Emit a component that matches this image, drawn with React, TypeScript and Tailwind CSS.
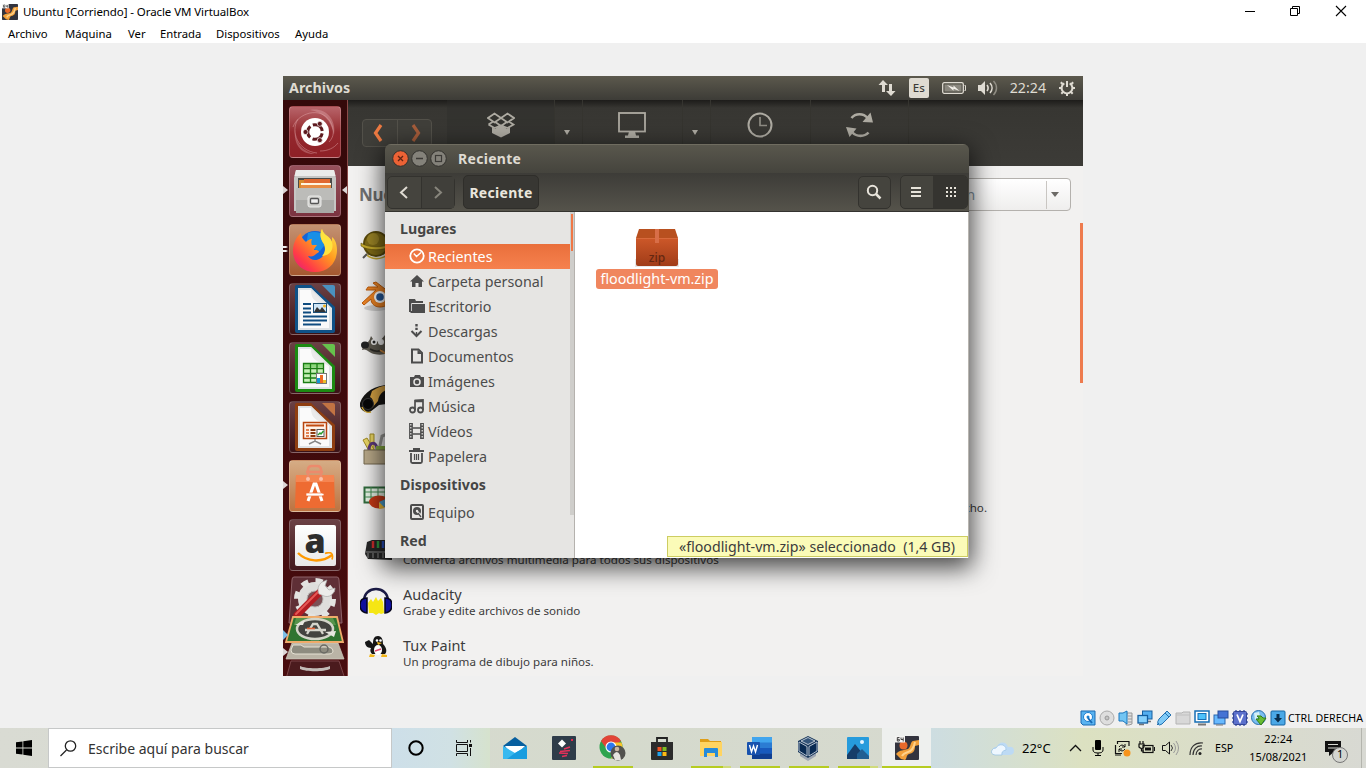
import React from "react";

type P = { className?: string; children?: React.ReactNode };

const Svg = ({ w, h, vb, className = "", children }: P & { w: number; h: number; vb?: string }) => (
  <svg width={w} height={h} viewBox={vb ?? `0 0 ${w} ${h}`} fill="none" className={`block shrink-0 ${className}`}>
    {children}
  </svg>
);

/* ---------- VirtualBox window chrome ---------- */

const VmLogo = ({ s }: { s: number }) => (
  <Svg w={s} h={s} vb="0 0 24 24">
    <rect width="24" height="24" rx="1" fill="#33343e" />
    <circle cx="8.500" cy="9.500" r="4" fill="#e8692a" />
    <path d="M24 4l-6 1c-3 1-2 6-5 8-3 1-7 1-10 3l-2 2 5 5 4 1c2-1 1-5 4-6 5-1 6-4 6-8l4-1z" fill="#f2a03a" />
    <path d="M20 6c-1 5-3 9-7 10-3 1-5 2-6 4" stroke="#ffd28a" strokeWidth="2" />
    <rect x="0" y="0" width="10" height="6.500" fill="#f4f4f2" />
    <path d="M4.500 1.500H2.300V5h2V3.300h-2M6 1.500v2h2.200M8.200 1.500v4" stroke="#333" strokeWidth=".9" />
  </Svg>
);

const TitleBar = () => (
  <div className="flex h-[23px] shrink-0 items-center bg-white">
    <div className="ml-[2px]"><VmLogo s={16} /></div>
    <span className="ml-[5px] grow text-[11.500px] tracking-[-0.080px]">Ubuntu [Corriendo] - Oracle VM VirtualBox</span>
    <Svg w={12} h={12} className="mr-[33px]"><path d="M1 5.500h10" stroke="#000" /></Svg>
    <Svg w={12} h={12} className="mr-[34px] mb-[2px]">
      <path d="M1.500 3.500h7v7h-7zM3.500 3.500v-2h7v7h-2" stroke="#000" />
    </Svg>
    <Svg w={12} h={12} className="mr-[19px] mb-[2px]"><path d="M1 1l10 10M11 1L1 11" stroke="#000" strokeWidth="1.100" /></Svg>
  </div>
);

const MenuBar = () => (
  <div className="flex h-[20px] shrink-0 items-center bg-white pt-[2px] pl-2 text-[11.300px]">
    <span className="w-[57px]">Archivo</span>
    <span className="w-[63px]">Máquina</span>
    <span className="w-[32px]">Ver</span>
    <span className="w-[56px]">Entrada</span>
    <span className="w-[79px]">Dispositivos</span>
    <span>Ayuda</span>
  </div>
);

/* ---------- Ubuntu top panel ---------- */

const TopPanel = () => (
  <div className="flex h-6 shrink-0 items-center bg-linear-to-b from-[#5c594d] to-[#3d3c37] pl-[6px] text-[#dfdbd2]">
    <span className="grow text-[14.300px] font-bold">Archivos</span>
    <Svg w={18} h={18} className="mr-[13px]">
      <path d="M5 1L.500 6H4v7h3V6h3zM13 17l4.500-5H14V5h-3v7H8z" fill="#dfdbd2" />
    </Svg>
    <span className="mr-[13px] flex h-5 w-5 items-center justify-center rounded-[2px] bg-[#dfdbd2] text-[11.500px] font-medium text-[#3c3b37]">Es</span>
    <Svg w={24} h={14} className="mr-[12px]">
      <rect x=".700" y="1.700" width="20.600" height="10.600" rx="1.500" stroke="#dfdbd2" strokeWidth="1.300" />
      <rect x="2.500" y="3.500" width="17" height="7" fill="#8a877e" />
      <path d="M5 4l6.500 2.500V4.500L17.500 10l-6-2.300v2z" fill="#f2efe8" />
      <path d="M22.500 4.500h1v5h-1" stroke="#dfdbd2" />
    </Svg>
    <Svg w={20} h={18} className="mr-[12px]">
      <path d="M0 6h3l4-4v14l-4-4H0z" fill="#dfdbd2" />
      <path d="M9 6c1.500 2 1.500 4 0 6M12 4c2.700 3 2.700 7 0 10" stroke="#dfdbd2" strokeWidth="1.600" />
      <path d="M15.500 2c4 4 4 10 0 14" stroke="#8f8c83" strokeWidth="1.500" />
    </Svg>
    <span className="mr-[12px] text-[14.200px]">22:24</span>
    <Svg w={18} h={18} className="mr-[7px]">
      <path d="M6.300 4.300a5.400 5.400 0 1 0 5.400 0" stroke="#dfdbd2" strokeWidth="2" />
      <path d="M9 2v6" stroke="#dfdbd2" strokeWidth="2" />
      <path d="M1 9h2.500M14.500 9H17M2.800 3.300l2 2M15.200 3.300l-2 2M3.300 14.700l1.700-1.700M14.700 14.700L13 13M9 14.500V17" stroke="#dfdbd2" strokeWidth="2" />
    </Svg>
  </div>
);

/* ---------- Launcher ---------- */

const Tile = ({ className = "", children, left, right }: P & { left?: "arrow" | "double"; right?: boolean }) => (
  <div className="relative flex justify-center">
    {left === "arrow" && <Svg w={5} h={8} className="absolute top-[21px] left-0"><path d="M0 0l5 4-5 4z" fill="#dcd6d6" /></Svg>}
    {left === "double" && <Svg w={5} h={8} className="absolute top-[21px] left-0"><path d="M0 1h3l2 1-2 1H0zM0 5h3l2 1-2 1H0z" fill="#eee" /></Svg>}
    {right && <Svg w={5} h={8} className="absolute top-[21px] right-0"><path d="M5 0L0 4l5 4z" fill="#dcd6d6" /></Svg>}
    <div className={`flex h-[52px] w-[52px] items-center justify-center rounded-[4px] border border-white/20 ${className}`}>{children}</div>
  </div>
);

const DocFrame = ({ c, c2, children }: { c: string; c2: string; children: React.ReactNode }) => (
  <Svg w={42} h={50}>
    <path d="M1 3q0-2 2-2h14l24 22v24q0 2-2 2H3q-2 0-2-2z" fill={c} />
    <path d="M28 1h11q2 0 2 2v11z" fill={c2} />
    <path d="M4 4h13l21 20v22H4z" fill="#dfe3e6" />
    <path d="M6 6h11l18 17v21H6z" fill="#fafafa" />
    <path d="M17 4l20 20c-2-1-8-5-12-5-5-2-8-6-8-13z" fill="#e2e2e2" opacity=".7" />
    {children}
  </Svg>
);

const Launcher = () => (
  <div className="flex w-[65px] shrink-0 flex-col gap-[7px] border-r border-[#8b4a48] bg-linear-to-b from-[#35090a] to-[#480c0e] pt-[6px]">
    <Tile className="bg-linear-to-b from-[#b8646a] via-[#94282e] to-[#8f2026]">
      <Svg w={50} h={50}>
        <path d="M20 3c14-3 27 8 24 25C41 12 32 5 20 3zM5 22c0 14 7 22 20 25C12 48 3 38 5 22z" fill="#f1c8ca" opacity=".3" />
        <path d="M3 20C8 6 30-1 40 14c5 9 4 16-1 21M8 12C0 25 8 44 27 46M30 44c8 0 14-3 18-8" stroke="#e5aaae" strokeWidth="1" opacity=".45" />
        <circle cx="25" cy="25" r="14" fill="#fff" />
        <circle cx="25" cy="25" r="7.300" stroke="#5e1a1f" strokeWidth="3" strokeDasharray="12.500 2.790" strokeDashoffset="-1.400" />
        <circle cx="15.500" cy="25" r="2.500" fill="#5e1a1f" stroke="#fff" strokeWidth=".7" />
        <circle cx="29.800" cy="16.800" r="2.500" fill="#5e1a1f" stroke="#fff" strokeWidth=".7" />
        <circle cx="29.800" cy="33.200" r="2.500" fill="#5e1a1f" stroke="#fff" strokeWidth=".7" />
      </Svg>
    </Tile>
    <Tile left="arrow" right className="bg-linear-to-b from-[#97515b] to-[#7c3340]">
      <Svg w={46} h={48}>
        <path d="M4 3h38l2 8v33H2V11z" fill="#c6c6c4" />
        <path d="M4 3h38l1.500 6h-41z" fill="#ebebea" />
        <path d="M6 11h34v10H6z" fill="#4b4b48" />
        <path d="M7 13h27v8H7z" fill="#d88a2e" />
        <path d="M12 12h26v5H12z" fill="#e06830" />
        <path d="M9 16h30v6H9z" fill="#fff4e0" />
        <path d="M9 18h30v4H9z" fill="#e88c42" />
        <path d="M4 21h38v25H4z" fill="#a9a9a6" />
        <path d="M4 21h38v12H4z" fill="#bcbcb9" />
        <rect x="16" y="29" width="13" height="11" rx="2" fill="#d0d0cd" stroke="#ececea" />
        <rect x="18.500" y="31.500" width="8" height="5" rx="1" fill="#eee" stroke="#555" strokeWidth="1.300" />
      </Svg>
    </Tile>
    <Tile left="double" className="bg-linear-to-b from-[#c49272] to-[#a4582f]">
      <Svg w={46} h={46}>
        <defs>
          <linearGradient id="ff" x1="1" y1="0" x2="0" y2="1">
            <stop offset="0" stopColor="#fff14a" /><stop offset=".4" stopColor="#ff9a1f" /><stop offset=".75" stopColor="#ff3b47" /><stop offset="1" stopColor="#e0138c" />
          </linearGradient>
        </defs>
        <circle cx="23" cy="21" r="17" fill="#1465d8" />
        <path d="M16 6c10-3 18 1 19 9l-7 9-14-4z" fill="#1aa6ee" opacity=".65" />
        <path d="M30 2c-3 6-1 11 2 15 3 7-1 16-9 16-3 0-6-2-7-4 4 1 6 0 8-2l3-2c0-2-3-2-5-2 0-2 2-3 3-5h-5c-1-2-1-4 0-6-3 0-5 2-6 3C11 12 9 10 9 6 3 11 1 18 1 24c0 12 9 21 22 21s22-9 22-22c0-6-2-11-5-13v5C38 9 31 8 30 2z" fill="url(#ff)" />
        <path d="M30 2c-3 6-1 11 2 15 2 5 1 9-2 12 9-1 12-7 10-14C38 9 31 8 30 2z" fill="#ffe33f" />
      </Svg>
    </Tile>
    <Tile className="bg-linear-to-b from-[#6b4145] to-[#3b1216]">
      <DocFrame c="#0f5187" c2="#4a91c0">
        <path d="M9 20h8M9 24.500h8M9 28.500h8M9 32.500h24M9 36.500h24M9 40.500h18" stroke="#0f4c80" strokeWidth="2" />
        <rect x="19.500" y="19.500" width="13" height="9" fill="#cfe6f7" stroke="#1d4f78" />
        <path d="M20 28l3-5 3 3 2-3 4 5z" fill="#333" /><circle cx="30.500" cy="22" r="1.500" fill="#f2b21b" />
      </DocFrame>
    </Tile>
    <Tile className="bg-linear-to-b from-[#6b4145] to-[#3b1216]">
      <DocFrame c="#1c8a12" c2="#66c24c">
        <path d="M9 20h21v19H9z" fill="#c8f0b8" /><path d="M9 20h21v4H9z" fill="#8bd87a" />
        <path d="M9.500 20.500h20v19h-20zM16.500 20v19M23 20v19M9 25.500h21M9 30.500h21M9 35h21" stroke="#1b7d14" strokeWidth="1.300" />
        <rect x="22.500" y="30.500" width="10" height="10" fill="#fff" stroke="#777" />
        <path d="M23 35h3v5h-3z" fill="#1596d4" /><path d="M26 32h3v8h-3z" fill="#ee6b24" /><path d="M29 37h3v3h-3z" fill="#eac02a" />
      </DocFrame>
    </Tile>
    <Tile className="bg-linear-to-b from-[#6b4145] to-[#3b1216]">
      <DocFrame c="#8f3e11" c2="#c27343">
        <rect x="9.500" y="20.500" width="23" height="16" fill="#fff3ea" stroke="#b8450f" strokeWidth="1.500" />
        <path d="M12 23.500h18" stroke="#c24c12" strokeWidth="2" />
        <path d="M12 28h3M12 31h3M12 34h3" stroke="#e38354" strokeWidth="2" />
        <path d="M16.500 28h5M16.500 31h5M16.500 34h5" stroke="#8b3a10" strokeWidth="1.800" />
        <rect x="23" y="27.500" width="7" height="7" fill="#fff" stroke="#555" /><path d="M24 33l2-2 1 1 2.500-3" stroke="#2a9c2a" strokeWidth="1.400" />
        <path d="M21 37v3M15 42l6-3 6 3" stroke="#888" strokeWidth="1.500" />
      </DocFrame>
    </Tile>
    <Tile left="arrow" className="bg-linear-to-b from-[#d5ac85] to-[#bd7340]">
      <Svg w={44} h={48}>
        <path d="M3 13h38l1 33H2z" fill="#ee6b32" />
        <path d="M3 13h38l.3 7H2.700z" fill="#f58551" />
        <path d="M15 17V8q0-4 4-4h5q4 0 4 4v9M13 10h17" stroke="#ec8a6c" strokeWidth="2.500" />
        <circle cx="15" cy="17" r="2" fill="#fbc0a8" /><circle cx="28" cy="17" r="2" fill="#fbc0a8" />
        <path d="M15 39l6-17h2l6 17" stroke="#fff" strokeWidth="3" />
        <path d="M13 31h15.500q2.500 0 2.500 1.500t-2.500 1.500H13z" fill="#fff" stroke="#ee6b32" strokeWidth=".7" />
      </Svg>
    </Tile>
    <Tile className="bg-linear-to-b from-[#6b4145] to-[#43181d]">
      <div className="relative flex h-[41px] w-[41px] justify-center rounded-[2px] bg-linear-to-b from-white to-[#e8e8e8]">
        <span className="mt-[-7px] font-['Open_Sans',sans-serif] text-[34px] leading-[44px] font-extrabold text-[#2d2d2d]">a</span>
        <Svg w={38} h={12} className="absolute bottom-[2px] left-[2px]">
          <path d="M1 1c9 9 24 10 34 2" stroke="#ff9900" strokeWidth="2.400" />
          <path d="M28 1.500c5-2 9-1 7 6" stroke="#ff9900" strokeWidth="1.700" />
        </Svg>
      </div>
    </Tile>
    <Svg w={64} h={104} className="mt-[-3px]">
      <path d="M11 2h43q2 0 2 3l3 43H6L9 5q0-3 2-3z" fill="#5f2f36" stroke="#8e6268" />
      <circle cx="32" cy="24" r="12.500" stroke="#dededc" strokeWidth="9" />
      <circle cx="32" cy="24" r="18" stroke="#e3e3e1" strokeWidth="6" strokeDasharray="7 7.130" />
      <circle cx="32" cy="24" r="8" fill="#7b5156" stroke="#b9b9b7" />
      <path d="M14 40l24-24" stroke="#b21c22" strokeWidth="7" strokeLinecap="round" />
      <path d="M13 39l22-22" stroke="#e55755" strokeWidth="2" strokeLinecap="round" />
      <path d="M36 19c-2-4-1-9 3-12l5-2-2 6 4 4 6-2c0 6-6 10-11 8z" fill="#ececea" stroke="#a9a9a7" strokeWidth=".7" />
      <path d="M8 86h48l6 18H3z" fill="#4b1b1e" stroke="#7a4548" />
      <path d="M17 91c6 3 24 3 30 0v3c-6 3-24 3-30 0z" fill="#c2bcb8" />
      <path d="M9 68h46l6 16H3z" fill="#bab4a6" stroke="#d3cdc0" strokeWidth=".7" />
      <path d="M10 70h8l3 2h25q4 1 4 4t-5 3H12q-4 0-4-4z" fill="#8e8c80" stroke="#e6e2d4" />
      <circle cx="41" cy="74" r="4" stroke="#6a6a64" strokeWidth="1.500" />
      <path d="M10 42h44l6 25H3z" fill="#2f7430" stroke="#efab6a" strokeWidth="1.800" />
      <path d="M13 43h37l3 7H11z" fill="#75a85d" opacity=".6" />
      <ellipse cx="32" cy="54" rx="18" ry="10" fill="#43433f" stroke="#d4d5c9" strokeWidth="2.500" />
      <path d="M24 59l6-10h4l6 10M22 55h21" stroke="#d6d5cc" strokeWidth="2.300" />
      <path d="M24 53.500h8" stroke="#e4673a" strokeWidth="1.600" />
      <path d="M42 57l11-1-2 6zM12 50l10-5-2 5z" fill="#e8e8e0" />
      <path d="M0 55l5 5-5 5z" fill="#7cbfe6" /><path d="M0 73l5 4-5 4z" fill="#dcd6d6" />
    </Svg>
  </div>
);

/* ---------- Background window ---------- */

const Cell = ({ className = "", children }: P) => (
  <div className={`flex h-[50px] shrink-0 items-center justify-center border-r border-[#35342f] ${className}`}>{children}</div>
);
const Caret = () => <Svg w={6} h={5} className="mt-[15px] mr-[4px]"><path d="M0 0h6L3 5z" fill="#aeaba2" /></Svg>;

const BackToolbar = () => (
  <div className="flex h-[66px] shrink-0 bg-linear-to-b from-[#1d1c1a] via-[#373632] via-12% to-[#3c3b37]">
    <div className="mt-[19px] ml-[14px] flex h-7 w-[70px] shrink-0 rounded-[4px] border border-[#53514a] bg-[#403f3a]">
      <div className="flex w-[35px] items-center justify-center border-r border-[#53514a] pr-[4px]">
        <Svg w={10} h={18}><path d="M8 1L2.500 9 8 17" stroke="#ee7a42" strokeWidth="3.200" /></Svg>
      </div>
      <div className="flex grow items-center justify-center pl-[3px]">
        <Svg w={10} h={18}><path d="M2 1l5.500 8L2 17" stroke="#a65d3b" strokeWidth="3.200" /></Svg>
      </div>
    </div>
    <Cell className="ml-[15px] w-[108px] border-0 bg-[#2e2d2a]/40">
      <Svg w={28} h={26}>
        <path d="M14 6L7.500 1.500 1 6l6.500 4.500zM14 6l6.500-4.500L27 6l-6.500 4.500zM7.500 9.500L14 14M20.500 9.500L14 14M1.500 12.500l6 3.500L14 13.500 20.500 16l6-3.500-4-2.500M1.500 12.500l4-2.500" stroke="#aeaba2" strokeWidth="1.800" />
        <path d="M5 15l3 2 6-4.500 6 4.500 3-2v6l-9 4.500L5 21z" fill="#aeaba2" />
      </Svg>
    </Cell>
    <Cell className="w-[28px]"><Caret /></Cell>
    <Cell className="w-[100px] pr-[2px]">
      <Svg w={28} h={27}>
        <rect x="1" y="1" width="26" height="18.500" stroke="#aeaba2" strokeWidth="1.800" />
        <path d="M11 19.500h6l1 4h3V26H7v-2.500h3z" fill="#aeaba2" />
      </Svg>
    </Cell>
    <Cell className="w-[28px]"><Caret /></Cell>
    <Cell className="w-[100px] border-0 pr-[2px]">
      <Svg w={26} h={26}><circle cx="13" cy="13" r="11.500" stroke="#aeaba2" strokeWidth="2" /><path d="M13 5v8.500h7" stroke="#8f8c84" strokeWidth="1.700" /></Svg>
    </Cell>
    <Cell className="w-[98px] border-0">
      <Svg w={28} h={26}>
        <path d="M5.500 6c4-5 12-5 16 0M22.500 20.500c-4 4.500-12 4.500-16 0" stroke="#aeaba2" strokeWidth="2.600" />
        <path d="M24.500.500L27 10.500l-10.500-.500zM0 15l10.500 1.500-7 8.500z" fill="#aeaba2" />
      </Svg>
    </Cell>
  </div>
);

const apps: { name: string; desc: string; icon: React.ReactNode }[] = [
  { name: "", desc: "", icon: <Svg w={32} h={34}>
    <circle cx="16" cy="15" r="12" fill="#806c16" stroke="#5a4a0a" strokeWidth="2" /><circle cx="13" cy="10" r="6" fill="#a9922e" opacity=".7" />
    <path d="M1 14c7 5 23 5 30 0v3c-7 5-23 5-30 0z" fill="#c7ac2c" stroke="#5a4a0a" strokeWidth=".6" /><path d="M6 25c5 6 15 6 21 1" stroke="#c6aa32" strokeWidth="1.600" /><path d="M7 25l-4 4" stroke="#555" strokeWidth="2" /></Svg> },
  { name: "", desc: "", icon: <Svg w={32} h={32}>
    <ellipse cx="16" cy="27" rx="12" ry="3" fill="#aaa" opacity=".5" /><path d="M2 22L16 9H6l2-3h10l-5-4 3-1 13 10c6 7 0 15-9 15-6 0-9-4-9-8l-7 6z" fill="#ee8525" stroke="#bd5c0c" /><circle cx="20" cy="16" r="6" fill="#fff" /><circle cx="20" cy="16" r="3.800" fill="#24589b" /></Svg> },
  { name: "", desc: "", icon: <Svg w={32} h={32} className="mb-[3px]">
    <path d="M4 13c4 0 5-1 7-7l4 6 5-1 5-6 4 12c0 7-6 9-15 7-6-2-8-6-12-4z" fill="#5d594f" /><ellipse cx="5" cy="15" rx="4" ry="3.500" fill="#222" /><circle cx="14" cy="12" r="3" fill="#eee" /><circle cx="21" cy="12" r="3" fill="#eee" /><circle cx="14" cy="12" r="1.500" fill="#222" /><path d="M10 19c5 3 8 3 12 1" stroke="#2b2925" strokeWidth="1.500" /><path d="M20 20l10 6" stroke="#c7843d" strokeWidth="2" /></Svg> },
  { name: "", desc: "", icon: <Svg w={34} h={32}>
    <path d="M1 20C5 8 18 1 33 2l1 18-14 2-9 7c-6 1-11-3-10-9z" fill="#161513" /><path d="M13 8c7-5 12-6 20-5v3c-7 0-13 4-14 12l-6 7c2-7 1-9-2-11z" fill="#d7a344" /><circle cx="9" cy="21" r="5.500" fill="#080808" stroke="#373737" /><path d="M3 24c2 5 6 6 9 5" stroke="#d4ac3c" strokeWidth="1.500" /></Svg> },
  { name: "", desc: "", icon: <Svg w={32} h={34}>
    <path d="M3 7l4-2 8 13H9zM10 1h4v16h-4z" fill="#ead665" stroke="#a08b25" /><path d="M9 17c0-9 8-9 8 0" stroke="#5c397b" strokeWidth="3" /><path d="M19 17l3-14 5-2v16" stroke="#9b9b97" strokeWidth="3" /><path d="M16 13h16v5H16z" fill="#85a943" /><path d="M4 17h28v14H4z" fill="#b9a989" stroke="#75684f" /></Svg> },
  { name: "", desc: "", icon: <Svg w={32} h={32} className="mb-[6px]">
    <path d="M4.500 5.500h26v15h-26z" fill="#e6f3e5" stroke="#306b3c" strokeWidth="2" /><path d="M5 10h26M5 15h26M11 5v15M18 5v15M25 5v15" stroke="#438b50" /><ellipse cx="19" cy="20" rx="10" ry="6.500" fill="#c63916" /><path d="M19 20l9-4c5 4 1 8-5 9z" fill="#4ca0d1" /><path d="M19 20l6 6-6 1z" fill="#f1bf37" /></Svg> },
  { name: "", desc: "Convierta archivos multimedia para todos sus dispositivos", icon: <Svg w={32} h={32} className="mb-[5px]">
    <path d="M7 9l5-2h20v20l-24-1-3-5z" fill="#262626" /><path d="M13 8v7" stroke="#ca2c2b" strokeWidth="2.500" /><path d="M18 8v7" stroke="#2d963d" strokeWidth="2.500" /><path d="M23 8v7" stroke="#274fc0" strokeWidth="2.500" /><path d="M6 19h26M8 25v-5M13 25v-5M18 25v-5M23 25v-5" stroke="#888" /></Svg> },
  { name: "Audacity", desc: "Grabe y edite archivos de sonido", icon: <Svg w={32} h={32} className="mb-[4px]">
    <path d="M4 16C4 0 28 0 28 16" stroke="#1c1c46" strokeWidth="2.500" /><path d="M9 28l-1-10 3-4 2 3 3-5 2 4 3-3 2 4 1 11-3 1-2-1-3 2-3-2z" fill="#f5e614" /><path d="M7 13v15q-7-1-7-8t7-7z" fill="#10109c" stroke="#05051d" strokeWidth="1.500" /><path d="M25 13v15q7-1 7-8t-7-7z" fill="#10109c" stroke="#05051d" strokeWidth="1.500" /></Svg> },
  { name: "Tux Paint", desc: "Un programa de dibujo para niños.", icon: <Svg w={32} h={26} className="mb-[11px]">
    <path d="M5 7l4-2 4 4c0-5 1-8 5-8s5 4 5 8c4 4 4 8 2 10H12c-2-2-2-4-1-6-4 0-6-3-6-6z" fill="#161616" /><ellipse cx="18" cy="15" rx="4" ry="5" fill="#fff" /><circle cx="17" cy="5.500" r="1.300" fill="#fff" /><circle cx="20.500" cy="5.500" r="1.300" fill="#fff" /><path d="M17 7l5 1-4 2zM10 19l5 1-1 2H9zM22 19l5 1v2h-6z" fill="#f2b71b" /><path d="M15 16l6-2" stroke="#df4d72" strokeWidth="1.500" /></Svg> },
];

const BackContent = () => (
  <div className="flex grow flex-col overflow-hidden bg-[#f2f1f0] pl-[11px] text-[#3c3c3c]">
    <div className="flex h-[54px] shrink-0 items-center justify-between pt-[3px] pr-3">
      <span className="text-[17px] font-bold tracking-[-0.300px] text-[#707070]">Nuevas</span>
      <div className="flex h-[33px] w-[151px] items-center rounded-[4px] border border-[#b4b1ad] bg-linear-to-b from-white to-[#efeeed]">
        <span className="grow pl-[7px] text-[14.500px] text-[#8093a0]">Origen</span>
        <div className="flex h-7 w-[24px] shrink-0 items-center border-l border-[#c9c6c2] pl-[4px]">
          <Svg w={8} h={5}><path d="M0 0h8L4 5z" fill="#6c6a66" /></Svg>
        </div>
      </div>
    </div>
    {apps.map((a, i) => (
      <div key={i} className="flex h-[51px] shrink-0 items-center pl-px">
        <div className="flex w-8 shrink-0 items-center justify-center overflow-hidden">{a.icon}</div>
        <div className="ml-[11px] flex h-[38px] flex-col pt-[1px]">
          <span className="h-[18px] text-[14.500px] leading-[18px]">{a.name}</span>
          <span className="text-[11.600px] leading-[15px] whitespace-nowrap">{a.desc}</span>
        </div>
      </div>
    ))}
  </div>
);

/* ---------- Files window ---------- */

const g = "#4c4c4c";
const places: { label: string; icon: React.ReactNode; on?: boolean }[] = [
  { label: "Recientes", on: true, icon: <><circle cx="8" cy="8" r="6.700" stroke="#fff" strokeWidth="1.800" /><path d="M4.800 5.500L7.500 8.500 12 4.500" stroke="#fff" strokeWidth="1.400" /></> },
  { label: "Carpeta personal", icon: <path d="M8 2l7 6.500h-2V14H9.500v-4h-3v4H3V8.500H1z" fill={g} /> },
  { label: "Escritorio", icon: <><path d="M0 1h6l1 2h7v2H3v9H0z" fill={g} /><path d="M3 6h13v9H1.500V8z" fill={g} /><path d="M2.500 13V5.500H15" stroke="#e6e5e3" strokeWidth=".8" /></> },
  { label: "Descargas", icon: <><path d="M2.500 8L7.500 13 12.500 8" stroke={g} strokeWidth="2" /><path d="M6.300 1h2.400v2.400H6.300zM6.300 4.700h2.400v2.400H6.300zM6.800 9h1.400v3H6.800z" fill={g} /></> },
  { label: "Documentos", icon: <><path d="M3 1.500h6.500L13 5v9.500H3z" stroke={g} strokeWidth="2" /><path d="M8.500 2v4H13z" fill={g} /></> },
  { label: "Imágenes", icon: <><path d="M1 4h4l1-2h5l1 2h3v10H1z" fill={g} /><circle cx="8" cy="9" r="3" stroke="#e6e5e3" strokeWidth="1.500" /></> },
  { label: "Música", icon: <><path d="M6 12V2.500l8-.5v10" stroke={g} strokeWidth="1.700" /><path d="M6 3h8" stroke={g} strokeWidth="2.500" /><circle cx="3.500" cy="12" r="2.500" stroke={g} strokeWidth="1.800" /><circle cx="11.500" cy="12" r="2.500" stroke={g} strokeWidth="1.800" /></> },
  { label: "Vídeos", icon: <><path d="M2 0v16M13 0v16" stroke={g} strokeWidth="3.800" /><path d="M4 5h8M4 11h8" stroke={g} strokeWidth="1.300" /><path d="M1.800 1v15M13.200 1v15" stroke="#e6e5e3" strokeWidth="1.200" strokeDasharray="1.400 1.600" /></> },
  { label: "Papelera", icon: <><path d="M0 3h15M4 1h7" stroke={g} strokeWidth="1.800" /><path d="M2 5v8.500q0 1.500 1.500 1.500h8q1.500 0 1.500-1.500V5" stroke={g} strokeWidth="1.800" /><path d="M5.500 6v6M7.500 6v6M9.500 6v6" stroke={g} strokeWidth="1.200" /></> },
];

const Place = ({ label, icon, on }: { label: string; icon: React.ReactNode; on?: boolean }) => (
  <div className={`flex h-[25px] shrink-0 items-center pl-6 text-[14.300px] ${on ? "bg-linear-to-b from-[#e96f3b] to-[#f6814e] text-white" : "text-[#4c4c4c]"}`}>
    <Svg w={16} h={16} className="mr-[3px] mb-[2px]">{icon}</Svg>
    <span className="whitespace-nowrap">{label}</span>
  </div>
);
const Head = ({ className = "", children }: P) => (
  <div className={`flex shrink-0 items-center pl-[15px] text-[14.200px] font-bold text-[#454545] ${className}`}>{children}</div>
);

const FilesWindow = () => (
  <div className="absolute top-[68px] left-[102px] flex h-[414px] w-[584px] flex-col overflow-hidden rounded-t-[6px] shadow-[0_7px_24px_3px_rgba(0,0,0,0.7)]">
    <div className="flex h-[29px] shrink-0 items-center border-t border-[#6f6c60] bg-linear-to-b from-[#59574d] to-[#45443d] pb-[2px] pl-[7px]">
      <Svg w={55} h={17}>
        <circle cx="8.500" cy="8.500" r="7.800" fill="#ec6235" stroke="#33322e" /><path d="M6 6l5 5M11 6l-5 5" stroke="#5f2413" strokeWidth="1.300" />
        <circle cx="27.500" cy="8.500" r="7.800" fill="#84827a" stroke="#33322e" /><path d="M24 8.500h7" stroke="#3c3b37" strokeWidth="1.300" />
        <circle cx="46.500" cy="8.500" r="7.800" fill="#84827a" stroke="#33322e" /><rect x="43.500" y="5.500" width="6" height="6" stroke="#3c3b37" strokeWidth="1.200" />
      </Svg>
      <span className="ml-[11px] text-[14px] font-bold tracking-[0.300px] text-[#dfdbd2]">Reciente</span>
    </div>
    <div className="flex h-[39px] shrink-0 items-center border-b border-[#34332f] bg-linear-to-b from-[#3d3c38] to-[#55534b] pr-px pl-[2px]">
      <div className="flex h-[33px] w-[68px] rounded-[5px] border border-[#33322e] bg-[#45443e]">
        <div className="flex w-[33px] items-center justify-center pr-px"><Svg w={10} h={13}><path d="M8 1L2 6.500 8 12" stroke="#dfdbd2" strokeWidth="2" /></Svg></div>
        <div className="flex grow items-center justify-center border-l border-[#33322e] bg-[#403f3a] pr-px"><Svg w={10} h={13}><path d="M2 1l6 5.500L2 12" stroke="#87857c" strokeWidth="2" /></Svg></div>
      </div>
      <div className="ml-[8px] flex h-[34px] w-[76px] items-center justify-center rounded-[5px] border border-[#2f2e2a] bg-[#383733] text-[14px] font-bold tracking-[0.300px] text-[#eae6dd]">Reciente</div>
      <div className="ml-auto flex h-[33px] w-[33px] items-center justify-center rounded-[5px] border border-[#33322e] bg-[#45443e] pr-[2px]">
        <Svg w={16} h={16}><circle cx="6.500" cy="6.500" r="4.700" stroke="#e7e3da" strokeWidth="2" /><path d="M10 10l4.500 4.500" stroke="#e7e3da" strokeWidth="2.500" /></Svg>
      </div>
      <div className="ml-[9px] flex h-[34px] w-[68px] overflow-hidden rounded-[5px] border border-[#33322e] bg-[#45443e]">
        <div className="flex w-[32px] items-center justify-center pr-[2px]"><Svg w={10} h={10}><path d="M0 1h10M0 5h10M0 9h10" stroke="#e7e3da" strokeWidth="2" /></Svg></div>
        <div className="flex grow items-center justify-center bg-[#353430] pl-px"><Svg w={10} h={10}><path d="M0 1h10M0 5h10M0 9h10" stroke="#e7e3da" strokeWidth="2" strokeDasharray="2 2" /></Svg></div>
      </div>
    </div>
    <div className="flex min-h-0 grow">
      <div className="flex w-[185px] shrink-0 flex-col overflow-hidden bg-[#e6e5e3]">
        <Head className="h-8 pt-[2px]">Lugares</Head>
        {places.map((p) => <Place key={p.label} {...p} />)}
        <Head className="h-[31px] tracking-[0.050px]">Dispositivos</Head>
        <Place label="Equipo" icon={<><rect x="2" y="1" width="12" height="14" rx="1" stroke={g} strokeWidth="2" /><circle cx="8" cy="7" r="4" fill={g} /><circle cx="8" cy="7" r="1.200" fill="#e6e5e3" /><path d="M8 7l4 5" stroke="#e6e5e3" strokeWidth="2" /><path d="M9 9l3 4" stroke={g} strokeWidth="1.300" /></>} />
        <Head className="h-[31px]">Red</Head>
      </div>
      <div className="flex w-[5px] shrink-0 flex-col border-r border-[#b5b2ae] bg-[#e6e5e3]">
        <div className="flex h-[303px] w-[4px] shrink-0 justify-center bg-[#cfcecb] pt-[2px]">
          <div className="h-[37px] w-[2px] bg-[#f07746]" />
        </div>
      </div>
      <div className="flex grow flex-col border-r border-[#b8b5b0] bg-white">
        <div className="mt-[17px] ml-[21px] flex w-[122px] flex-col items-center">
          <Svg w={46} h={40}>
            <defs><linearGradient id="zb" x1="0" y1="0" x2="0" y2="1"><stop offset="0" stopColor="#cd5829" /><stop offset="1" stopColor="#a03c18" /></linearGradient></defs>
            <path d="M1 30h44v8H1z" fill="#d8d8d8" opacity=".6" />
            <path d="M5 0h36l3 9H2z" fill="#b8501f" /><path d="M2 9h42v26q0 2-2 2H4q-2 0-2-2z" fill="url(#zb)" />
            <path d="M2 9.500h42" stroke="#d86a3c" /><path d="M21 0h4v14h-4z" fill="#d86e48" />
            <text x="23" y="33" textAnchor="middle" fontFamily="Noto Sans, sans-serif" fontSize="12" fontWeight="500" fill="#642711">zip</text>
          </Svg>
          <span className="flex h-[20px] w-[122px] items-center justify-center rounded-[3px] bg-[#f0865e] text-[14.300px] text-white">floodlight-vm.zip</span>
        </div>
        <div className="mt-auto mb-px flex h-[21px] w-[301px] items-center self-end border border-[#cdcd62] bg-[#fbfbb8] pl-[11px] text-[14.200px] whitespace-pre text-[#3c3c3c]">«floodlight-vm.zip» seleccionado  (1,4 GB)</div>
      </div>
    </div>
  </div>
);

const Guest = () => (
  <div className="relative flex h-[600px] w-[800px] flex-col overflow-hidden">
    <TopPanel />
    <div className="flex min-h-0 grow">
      <Launcher />
      <div className="flex grow flex-col">
        <BackToolbar />
        <BackContent />
      </div>
    </div>
    <div className="absolute top-[147px] right-0 h-[160px] w-[3px] bg-[#ee7b4e]" />
    <span className="absolute top-[423px] right-[96px] text-[11.600px] text-[#3c3c3c]">ocho.</span>
    <FilesWindow />
  </div>
);

/* ---------- VirtualBox status strip ---------- */

const b = "#1c7fd0";
const StatusStrip = () => (
  <div className="flex h-5 items-center justify-end gap-[3px] pr-[2px]">
    <Svg w={16} h={16}><path d="M1 1h14v14H3l-2-2z" fill="#5ab3f0" stroke="#1a6ab2" /><circle cx="8" cy="7" r="4.500" fill="#fff" stroke={b} /><circle cx="8" cy="7" r="1.500" fill={b} /><path d="M8 8l4 5" stroke="#1769b4" strokeWidth="2" /></Svg>
    <Svg w={16} h={16}><circle cx="8" cy="8" r="7" fill="#dedede" stroke="#aaa" /><circle cx="8" cy="8" r="2" fill="#c4c4c4" stroke="#999" /></Svg>
    <Svg w={16} h={16}><path d="M9 3h5v11l-3 1H8z" fill="#e1e1e1" stroke="#999" /><path d="M10 6h4M10 9h4M10 12h4" stroke="#999" /><path d="M1 3h4l4-2v13l-4-3H1z" fill="#73c5f3" stroke="#1a76bd" /></Svg>
    <Svg w={16} h={16}><rect x="5.500" y="1" width="9.500" height="8" fill="#54aff0" stroke="#155fa0" /><path d="M7 14.500h-5M10 11.500h4" stroke="#777" strokeWidth="1.500" /><rect x="1" y="5.500" width="9.500" height="7.500" fill="#85d1fc" stroke="#155fa0" strokeWidth="1.300" /></Svg>
    <Svg w={16} h={16}><path d="M5 7l6-6 4 4-6 6-3 3q-3 2-4 0t1-5z" fill="#80caf7" stroke="#2370b0" /><path d="M9 3l4 4M1 15l2-2" stroke="#2370b0" /></Svg>
    <Svg w={16} h={16}><path d="M1 3h6l1-1h7v12H1z" fill="#d8d8d8" stroke="#b4b4b4" /><path d="M1 5h14" stroke="#c0c0c0" /></Svg>
    <Svg w={16} h={16}><rect x="1" y="1" width="14" height="11" fill="#fff" stroke="#156eb5" strokeWidth="1.500" /><rect x="4" y="3.500" width="8" height="6" fill="#4dc1fa" stroke="#156eb5" /><path d="M4 14.500h8" stroke="#777" strokeWidth="2" /></Svg>
    <Svg w={16} h={16}><rect x="1" y="5" width="11" height="9" fill="#68baff" stroke="#2866af" /><rect x="5" y="1" width="10" height="7" fill="#4473d4" stroke="#264f9b" /><path d="M3 15h7" stroke="#777" /></Svg>
    <Svg w={16} h={16}><path d="M0 4h16M0 8h16M0 12h16M4 0v16M8 0v16M12 0v16" stroke="#4c61b2" strokeWidth="1.500" /><rect x="1.500" y="1.500" width="13" height="13" rx="1" fill="#5b70cc" stroke="#344694" /><path d="M5 4.500l3 7 3-7" stroke="#fff" strokeWidth="1.700" /></Svg>
    <Svg w={16} h={16}><circle cx="7.500" cy="7.500" r="7" fill="#7abdf0" stroke="#2870ae" /><path d="M3 3l5-1 1 4-5 4z" fill="#d5eff8" /><path d="M6 6q5-1 6 2h3l-5 7-5-6h3q0-2-2-3z" fill="#68bd34" stroke="#337b19" /></Svg>
    <Svg w={16} h={16}><rect x="1" y="1" width="14" height="14" rx="1" fill="#4ba8e6" stroke="#1767a4" /><path d="M6.500 4h3v4H12l-4 4.500L4 8h2.500z" fill="#082d4c" /></Svg>
    <span className="ml-[-1px] w-[76px] pt-px text-[10.600px] whitespace-nowrap">CTRL DERECHA</span>
  </div>
);

/* ---------- Windows taskbar ---------- */

const Task = ({ line = "", extra, active, children }: { line?: string; extra?: boolean; active?: boolean; children: React.ReactNode }) => (
  <div className={`flex h-10 w-[49px] shrink-0 flex-col items-center justify-between ${active ? "bg-[#eef0ee]" : ""}`}>
    <div className="flex h-[38px] items-center pt-[2px]">{children}</div>
    <div className="flex h-[2px]">
      <div className={`h-[2px] ${line ? "bg-[#b6cc21]" : ""} ${line}`} />
      {extra && <div className="h-[2px] w-[8px] bg-[#d0db7c]" />}
    </div>
  </div>
);

const Taskbar = () => (
  <div className="flex h-10 shrink-0 items-center overflow-hidden bg-linear-to-r from-[#d9dbd3] via-[#d5dacd] via-45% to-[#d8d9d2]">
    <div className="flex w-12 shrink-0 justify-center">
      <Svg w={16} h={16}><path d="M0 2.300L6.500 1.400v6.200H0zM7.300 1.300L16 0v7.600H7.300zM0 8.400h6.500v6.200L0 13.700zM7.300 8.400H16V16l-8.700-1.300z" fill="#000" /></Svg>
    </div>
    <div className="flex h-10 w-[344px] shrink-0 items-center border border-[#c6c8c8] bg-white pl-[11px]">
      <Svg w={17} h={17}><circle cx="10.500" cy="6" r="5.200" stroke="#222" strokeWidth="1.300" /><path d="M6.500 10L.5 16" stroke="#222" strokeWidth="1.300" /></Svg>
      <span className="ml-[11px] text-[14px] text-[#333]">Escribe aquí para buscar</span>
    </div>
    <div className="flex h-10 w-[98px] shrink-0 items-center bg-linear-to-r from-[#cddfe9] via-[#d0e1e4] via-60% to-[#d6e2cd]">
      <Svg w={16} h={16} className="ml-4"><circle cx="8" cy="8" r="6.700" stroke="#000" strokeWidth="2" /></Svg>
      <Svg w={17} h={16} className="ml-[32px]"><path d="M.500 0v2.500h11V0M.500 16v-2.500h11V16M.500 4.500h11v7H.500zM14.500 0v2.500M14.500 8v8" stroke="#111" /><path d="M13 4h3v3h-3z" fill="#111" /></Svg>
    </div>
    <Task><Svg w={24} h={24}><path d="M0 10L12 1l12 9-12 8z" fill="#075f9f" /><path d="M2 10h20l-8 8H8z" fill="#fff" /><path d="M0 10l12 7 12-7v13H0z" fill="#38b9f0" /><path d="M12 17l12-7v13H4z" fill="#199ddf" /></Svg></Task>
    <Task><Svg w={24} h={24}><rect width="24" height="24" rx="1" fill="#2e3c49" /><path d="M10 3.500l4 4-4 4-4-4z" fill="#fff" /><path d="M19 3h2v2h-2z" fill="#e3264c" /><path d="M12 13l6-2M8 15.500l10-1M7 17l9 .500M10 20.500l5-1" stroke="#e5315a" strokeWidth="1.700" /></Svg></Task>
    <Task line="w-[40px]"><Svg w={27} h={26}><circle cx="12" cy="12" r="11.500" fill="#2fa44f" /><path d="M2 6a11.500 11.500 0 0 1 20 0l-9 6-6 1z" fill="#e24437" /><path d="M22.500 7.500A11.500 11.500 0 0 1 12 23.500l5-10-3-6z" fill="#fbc529" /><circle cx="12" cy="12" r="5.500" fill="#fff" /><circle cx="12" cy="12" r="4.400" fill="#2f78ed" /><circle cx="19" cy="18" r="7.500" fill="#52524e" /><circle cx="18" cy="14" r="2.300" fill="#ccb7a3" /><path d="M14 20q4-6 7 0l1 5h-6z" fill="#e6e5df" /></Svg></Task>
    <Task><Svg w={24} h={25}><path d="M7 7V2h10v5" stroke="#222" strokeWidth="1.800" /><path d="M1 6h22v17q0 1-1 1H2q-1 0-1-1z" fill="#2b2b2b" /><path d="M7.500 11h4v4h-4z" fill="#f15324" /><path d="M12.500 11h4v4h-4z" fill="#7ebc20" /><path d="M7.500 16h4v4h-4z" fill="#20a3ed" /><path d="M12.500 16h4v4h-4z" fill="#fdb914" /></Svg></Task>
    <Task line="w-[32px]" extra><Svg w={22} h={20}><path d="M0 1h8l2 2h11v4H0z" fill="#df9e17" /><path d="M0 4h22v14H0z" fill="#ffd461" /><path d="M4 19v-8q0-1 1-1h12q1 0 1 1v8h-3v-4H7v4z" fill="#278bd9" /></Svg></Task>
    <Task line="w-[40px]"><Svg w={25} h={22}><rect x="5" width="20" height="22" rx="1" fill="#2b7cd3" /><path d="M5 0h19q1 0 1 1v4.500H5z" fill="#41a5ee" /><path d="M5 11h20v5.500H5z" fill="#185abd" /><path d="M5 16.500h20V21q0 1-1 1H5z" fill="#103f91" /><rect y="5" width="13" height="13" rx="1" fill="#1852ae" /><path d="M2.500 8l2 7L6.500 9l2 6 2-7" stroke="#fff" strokeWidth="1.400" /></Svg></Task>
    <Task line="w-[40px]"><Svg w={22} h={25} className="mr-px"><path d="M3 15l8 5 8-5v5l-8 5-8-5z" fill="#9fa8b4" /><path d="M11 0l10 5v11l-10 6-10-6V5z" fill="#17365b" /><path d="M11 1.500l7 3.500-7 3.500L4 5z" fill="#34557a" stroke="#dfe5e9" strokeWidth=".8" /><path d="M2 6l8 4.500v9.500l-8-5zM20 6l-8 4.500v9.500l8-5z" fill="#092b53" stroke="#c6d0da" strokeWidth=".9" /></Svg></Task>
    <Task line="w-[32px]" extra><Svg w={22} h={22}><rect width="22" height="22" rx="1" fill="#269bdc" /><path d="M0 18L8 7l12 15H0z" fill="#163d69" /><path d="M10 17l5-5 7 7v3H10z" fill="#205f92" /><circle cx="15" cy="5" r="2" fill="#e3f4ff" /></Svg></Task>
    <Task line="w-[49px]" active><VmLogo s={24} /></Task>
    <div className="flex h-10 grow items-center bg-linear-to-r from-[#cddde1] via-[#dce1c1] via-35% to-[#d8d9d3] pl-[59px]">
      <Svg w={25} h={17}><path d="M8 15q-6 0-6-4t5-4q2-6 8-4 2 1 3 4 6-1 6 4 0 4-5 4z" fill="#bddaf4" /><path d="M5 15q-5-1-3-5 1-2 4-2 2-4 7-3 4 2 3 5-5 1-4 5z" fill="#eef7ff" stroke="#94bfe1" strokeWidth=".7" /></Svg>
      <span className="ml-[7px] w-[47px] pt-px text-[13px]">22°C</span>
      <Svg w={13} h={8}><path d="M1 7l5.500-5.500L12 7" stroke="#111" strokeWidth="1.300" /></Svg>
      <Svg w={12} h={16} className="ml-[10px]"><rect x="3" y="0" width="6" height="10" rx="1" fill="#000" /><path d="M1 7v3q0 3 5 3t5-3V7M6 13v3M3 15.500h6" stroke="#000" /></Svg>
      <Svg w={17} h={17} className="ml-[10px]"><path d="M15 6V1.500H3.500V4M1.500 5v8.500H8M1 15h6" stroke="#111" strokeWidth="1.200" /><path d="M5 7q3-4 6 0M11 4v3H8M5 9q3 4 6 0M5 12V9h3" stroke="#111" /><circle cx="13" cy="13" r="3.500" fill="#f7941d" /></Svg>
      <Svg w={17} h={14} className="ml-[7px]"><path d="M2 0v3M5 0v3M1 3h5v3q-2 3-5 0zM3.500 7v3H6" stroke="#111" strokeWidth="1.200" /><rect x="5" y="4.500" width="10" height="7" stroke="#111" strokeWidth="1.200" /><path d="M7 6.500h6v3H7z" fill="#111" /><path d="M16.500 6v4" stroke="#111" /></Svg>
      <Svg w={17} h={16} className="ml-[7px]"><path d="M.500 5.500h3l4-3.500v12l-4-3.500h-3z" stroke="#111" /><path d="M9 5q3 3 0 6" stroke="#333" /><path d="M11.500 3q4 5 0 10M14 1q5 7 0 14" stroke="#999" /></Svg>
      <Svg w={15} h={15} className="ml-[10px]"><path d="M1 14C1 6 6 1 14 2M4 14c0-6 4-9.500 9-9M7 14c0-4 3-6.500 6-6" stroke="#333" strokeWidth="1.200" /><circle cx="11" cy="12.500" r="1.500" fill="#222" /></Svg>
      <span className="ml-[11px] text-[10.700px]">ESP</span>
      <div className="ml-[16px] flex flex-col items-center text-[10.900px] leading-[18px]">
        <span>22:24</span><span>15/08/2021</span>
      </div>
      <div className="relative ml-[18px]">
        <Svg w={17} h={17}><path d="M0 1h16v11H9l-5 4v-4H0z" fill="#111" /><path d="M3 4.500h10M3 8h10" stroke="#d8d9d3" strokeWidth="1.200" /></Svg>
        <span className="absolute top-[7px] left-[7px] flex h-4 w-4 items-center justify-center rounded-full border border-[#777] bg-[#d4d5d0] text-[11px]">1</span>
      </div>
      <div className="ml-auto h-10 w-[5px] border-l border-[#b4b5ae]" />
    </div>
  </div>
);

export default function App() {
  return (
    <div className="flex h-[768px] w-[1366px] flex-col overflow-hidden bg-[#f0f0f0] font-['Noto_Sans',sans-serif] text-black">
      <TitleBar />
      <MenuBar />
      <div className="flex min-h-0 grow flex-col items-center justify-between pt-[33px]">
        <Guest />
        <div className="self-stretch"><StatusStrip /></div>
      </div>
      <Taskbar />
    </div>
  );
}
